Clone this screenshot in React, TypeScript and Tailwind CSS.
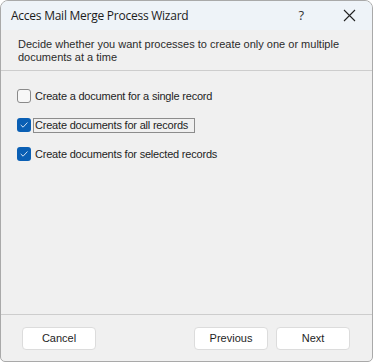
import { useState } from "react";

// ---- Option rows ----
type Option = {
  id: string;
  label: string;
  checked: boolean;
  focused?: boolean;
};

const initialOptions: Option[] = [
  { id: "single", label: "Create a document for a single record", checked: false },
  { id: "all", label: "Create documents for all records", checked: true, focused: true },
  { id: "selected", label: "Create documents for selected records", checked: true },
];

function CheckBox({ checked }: { checked: boolean }) {
  if (checked) {
    return (
      <span className="flex h-[14px] w-[14px] shrink-0 items-center justify-center rounded-[3px] bg-[#0a5fb4]">
        <svg width="10" height="10" viewBox="0 0 10 10" fill="none">
          <path d="M2 5.2 L4.1 7.2 L8.2 2.8" stroke="#cfe0f2" strokeWidth="1" strokeLinecap="round" strokeLinejoin="round" />
        </svg>
      </span>
    );
  }
  return <span className="block h-[14px] w-[14px] shrink-0 rounded-[3px] border border-[#8a8a8a] bg-[#f7f7f7]" />;
}

export default function App() {
  const [options, setOptions] = useState<Option[]>(initialOptions);

  const toggle = (id: string) => {
    setOptions((prev) => prev.map((o) => (o.id === id ? { ...o, checked: !o.checked } : o)));
  };

  return (
    <div className="h-[362px] w-[373px] bg-white">
      <div className="flex h-full w-full flex-col overflow-hidden rounded-t-[8px] rounded-b-[5px] border border-[#a9a9a9] bg-[#f0f0f0] font-['Liberation_Sans',Arial,sans-serif] text-[11px] text-[#222]">
        {/* ---- Title bar ---- */}
        <div className="flex h-[29px] shrink-0 items-center bg-[#eef3f8] pl-[10px]">
          <span className="flex-1 font-['Open_Sans',sans-serif] text-[12px] tracking-[-0.25px] text-[#1b1b1b]">
            Acces Mail Merge Process Wizard
          </span>
          <span className="mr-[39px] font-['Open_Sans',sans-serif] text-[13px] text-[#333]">?</span>
          <svg className="mr-[16px]" width="13" height="13" viewBox="0 0 13 13">
            <path d="M1 1 L12 12 M12 1 L1 12" stroke="#222" strokeWidth="1.1" />
          </svg>
        </div>

        {/* ---- Header ---- */}
        <div className="h-[41px] shrink-0 border-b border-[#cdcdcd] pl-[17px] pt-[8px] leading-[13px] tracking-[0px] text-[#2b2b2b]">
          Decide whether you want processes to create only one or multiple
          <br />
          documents at a time
        </div>

        {/* ---- Options ---- */}
        <div className="flex flex-1 flex-col gap-[15px] pl-[16px] pt-[18px]">
          {options.map((o) => (
            <label key={o.id} onClick={() => toggle(o.id)} className="flex h-[14px] cursor-default items-center gap-[2px]">
              <CheckBox checked={o.checked} />
              <span
                className={
                  o.focused
                    ? "border border-[#8c8c8c] pl-[1px] pr-[6px] leading-[13px] tracking-[-0.2px] text-[#1e1e1e]"
                    : "border border-transparent px-[1px] leading-[13px] tracking-[-0.2px] text-[#1e1e1e]"
                }
              >
                {o.label}
              </span>
            </label>
          ))}
        </div>

        {/* ---- Footer ---- */}
        <div className="flex h-[47px] shrink-0 items-start border-t border-[#cdcdcd] pl-[21px] pr-[22px] pt-[12px]">
          <button className="h-[23px] w-[74px] rounded-[4px] border border-[#dcdcdc] bg-white text-[11px] text-[#1e1e1e]">
            Cancel
          </button>
          <div className="flex-1" />
          <button className="mr-[8px] h-[23px] w-[74px] rounded-[4px] border border-[#dcdcdc] bg-white text-[11px] text-[#1e1e1e]">
            Previous
          </button>
          <button className="h-[23px] w-[74px] rounded-[4px] border border-[#dcdcdc] bg-white text-[11px] text-[#1e1e1e]">
            Next
          </button>
        </div>
      </div>
    </div>
  );
}
